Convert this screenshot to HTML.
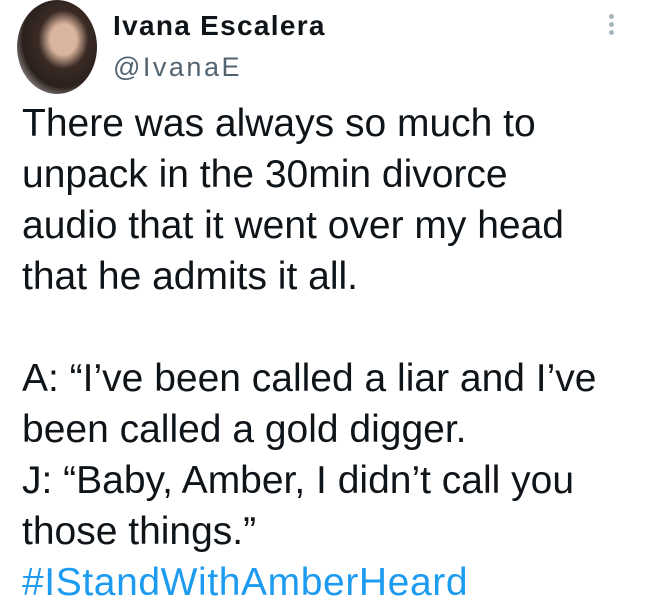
<!DOCTYPE html>
<html><head><meta charset="utf-8"><style>
html,body{margin:0;padding:0;background:#fff;width:649px;height:600px;overflow:hidden;font-family:"Liberation Sans",Arial,sans-serif;}
.av{position:absolute;left:17px;top:0;width:80px;height:94px;border-radius:50%;background:radial-gradient(ellipse at 58% 42%,#d9b49e 0 20%,#3a2a24 38%,#2a201c 62%,#b9b4b6 85%);overflow:hidden}
.name{position:absolute;left:113px;top:10px;font-weight:bold;font-size:28px;letter-spacing:1.3px;color:#0f1419}
.handle{position:absolute;left:113px;top:52px;font-size:27px;letter-spacing:2.5px;color:#536471}
.dots{position:absolute;left:609px;top:14px;width:6px}
.dots i{display:block;width:5px;height:5px;border-radius:50%;background:#a9b5bd;margin-bottom:3px}
.body{position:absolute;left:22px;top:98px;font-size:39px;line-height:51px;color:#0f1419;white-space:pre}
.tag{color:#1d9bf0;letter-spacing:0.6px}
</style></head><body>
<div class="av"></div>
<div class="name">Ivana Escalera</div>
<div class="handle">@IvanaE</div>
<div class="dots"><i></i><i></i><i></i></div>
<div class="body">There was always so much to
unpack in the 30min divorce
audio that it went over my head
that he admits it all.

A: “I’ve been called a liar and I’ve
been called a gold digger.
J: “Baby, Amber, I didn’t call you
those things.”
<span class="tag">#IStandWithAmberHeard</span></div>
</body></html>
